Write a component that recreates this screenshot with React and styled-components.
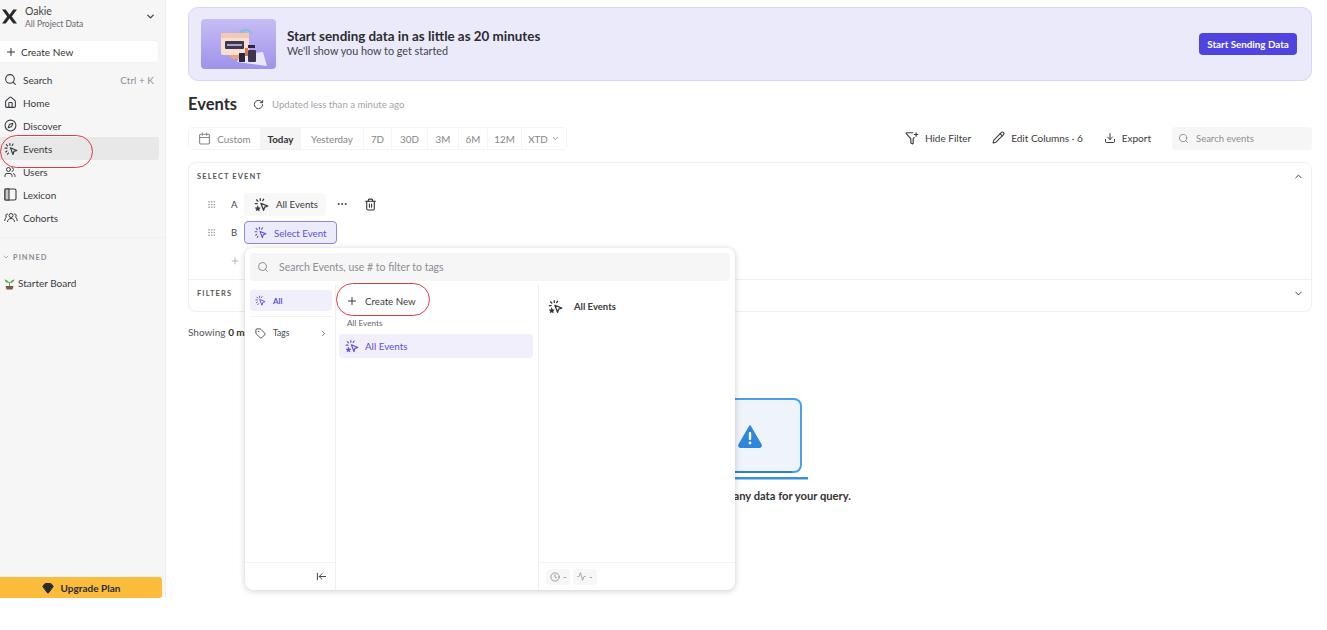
import React from 'react';
import styled, { createGlobalStyle } from 'styled-components';
import {
  Search, Home, Compass, Users, Plus, ChevronDown, ChevronUp, ChevronRight, RotateCw, Calendar,
  Grip, Trash2, Ellipsis, Tag, ArrowLeftToLine, Clock, Activity, Pencil, Download, FunnelPlus, Gem,
} from 'lucide-react';

const GlobalStyle = createGlobalStyle`
  html, body { margin: 0; padding: 0; background: #fff; }
  body { font-family: "Lato", "Liberation Sans", sans-serif; color: #333338; }
  * { box-sizing: border-box; }
`;

const Page = styled.div`
  position: relative;
  display: flex;
  align-items: flex-start;
  width: 1327px;
  height: 630px;
  overflow: hidden;
`;

const Sidebar = styled.aside`
  display: flex;
  flex-direction: column;
  flex: none;
  width: 166px;
  height: 598px;
  background: #f6f6f6;
  border-right: 1px solid #efefef;
`;

const ProjectRow = styled.div`
  display: flex;
  align-items: center;
  height: 33px;
  padding: 0 9px 0 2px;
`;

const ProjectText = styled.div`
  flex: 1;
  margin-left: 8px;
`;

const ProjectName = styled.div`
  font-size: 10.5px;
  line-height: 14px;
  color: #444;
`;

const ProjectSub = styled.div`
  font-size: 8.5px;
  line-height: 12px;
  color: #66666c;
`;

const CreateRow = styled.div`
  display: flex;
  align-items: center;
  gap: 4px;
  width: 158px;
  height: 21px;
  margin: 8px 0 6px;
  padding-left: 5px;
  background: #fff;
  border-radius: 0 3px 3px 0;
  box-shadow: 0 0 2px rgba(0, 0, 0, 0.06);
  font-size: 10px;
  color: #333;
`;

const NavRow = styled.div`
  display: flex;
  align-items: center;
  width: 159px;
  height: 23px;
  padding: 0 5px 0 4px;
  font-size: 10px;
  color: #3a3a40;
  background: ${p => (p.$active ? '#e8e8e8' : 'transparent')};
  border-radius: 0 3px 3px 0;
`;

const NavIcon = styled.span`
  display: flex;
  width: 19px;
  color: #3a3a40;
`;

const NavLabel = styled.span`
  flex: 1;
`;

const Shortcut = styled.span`
  font-size: 10px;
  color: #909096;
`;

const SideDivider = styled.div`
  height: 1px;
  margin-top: 8px;
  background: #f0f0f0;
`;

const PinnedLabel = styled.div`
  display: flex;
  align-items: center;
  gap: 3px;
  margin: 13px 0 0 2px;
  height: 12px;
  font-size: 7.5px;
  letter-spacing: 1px;
  color: #8d8d93;
  font-weight: 700;
`;

const PinnedRow = styled.div`
  display: flex;
  align-items: center;
  gap: 3px;
  margin-top: 13px;
  padding-left: 4px;
  height: 14px;
  font-size: 10px;
  color: #3a3a40;
`;

const UpgradeButton = styled.div`
  display: flex;
  align-items: center;
  justify-content: center;
  gap: 7px;
  width: 162px;
  height: 21px;
  margin-top: auto;
  background: #fbbc3d;
  border-radius: 0 3px 3px 0;
  font-size: 10px;
  font-weight: 700;
  color: #2c2c30;
`;

const Main = styled.main`
  flex: none;
  width: 1146px;
  padding: 7px 0 0 22px;
`;

const Banner = styled.section`
  display: flex;
  align-items: center;
  width: 1124px;
  height: 74px;
  padding: 0 14px 0 12px;
  background: #eaeafa;
  border: 1px solid #d8d6f0;
  border-radius: 10px;
`;

const BannerArt = styled.div`
  flex: none;
  width: 75px;
  height: 50px;
  border-radius: 4px;
  overflow: hidden;
  background: linear-gradient(180deg, #c6bdf5 0%, #9f92ea 100%);
`;

const BannerText = styled.div`
  flex: 1;
  margin: 0 0 3px 11px;
`;

const BannerTitle = styled.div`
  font-size: 13.4px;
  line-height: 16px;
  font-weight: 700;
  color: #2c2c30;
`;

const BannerSub = styled.div`
  font-size: 10.8px;
  line-height: 14px;
  color: #44444a;
`;

const PrimaryButton = styled.div`
  display: flex;
  align-items: center;
  justify-content: center;
  width: 98px;
  height: 22px;
  background: #4f44e0;
  border-radius: 4px;
  font-size: 9.8px;
  font-weight: 700;
  color: #fff;
`;

const TitleRow = styled.div`
  display: flex;
  align-items: center;
  height: 20px;
  margin-top: 13px;
`;

const PageTitle = styled.h1`
  margin: 0 16px 0 0;
  font-size: 16.5px;
  font-weight: 700;
  color: #2c2c30;
`;

const Updated = styled.span`
  margin-left: 8px;
  font-size: 9.6px;
  color: #a4a4aa;
`;

const Toolbar = styled.div`
  display: flex;
  align-items: center;
  justify-content: space-between;
  width: 1124px;
  height: 23px;
  margin-top: 13px;
`;

const Segments = styled.div`
  display: flex;
  height: 23px;
  border: 1px solid #f3f3f3;
  border-radius: 4px;
`;

const Segment = styled.div`
  display: flex;
  align-items: center;
  justify-content: center;
  gap: ${p => p.$gap || 6}px;
  width: ${p => p.$w}px;
  font-size: 9.8px;
  color: ${p => (p.$active ? '#333' : '#85858b')};
  font-weight: ${p => (p.$active ? 700 : 400)};
  background: ${p => (p.$active ? '#f5f5f5' : '#fff')};
  border-right: 1px solid #f5f5f5;
  &:last-child { border-right: 0; }
`;

const Actions = styled.div`
  display: flex;
  align-items: center;
`;

const Action = styled.div`
  display: flex;
  align-items: center;
  gap: 6px;
  margin-right: 21px;
  padding-bottom: 2px;
  font-size: 10px;
  color: #3a3a40;
`;

const SearchBox = styled.div`
  display: flex;
  align-items: center;
  gap: 7px;
  width: 140px;
  height: 23px;
  padding-left: 6px;
  background: #f6f6f6;
  border-radius: 4px;
  font-size: 9.5px;
  color: #8d8d93;
`;

const QueryCard = styled.section`
  width: 1124px;
  height: 150px;
  margin-top: 12px;
  border: 1px solid #f0f0f0;
  border-radius: 8px;
  box-shadow: 0 0 2px rgba(0, 0, 0, 0.03);
`;

const CardHeader = styled.div`
  display: flex;
  align-items: center;
  justify-content: space-between;
  height: 27px;
  padding: 0 7px 0 8px;
  font-size: 7.5px;
  font-weight: 700;
  letter-spacing: 1.1px;
  color: #55555b;
`;

const EventRow = styled.div`
  display: flex;
  align-items: center;
  height: 28.5px;
  padding-left: 18px;
`;

const RowLetter = styled.span`
  width: 13px;
  margin-left: 15px;
  font-size: 9.5px;
  color: #44444a;
`;

const EventChip = styled.div`
  display: flex;
  align-items: center;
  gap: 7px;
  width: ${p => p.$w}px;
  height: 23px;
  padding-left: 9px;
  border-radius: 4px;
  font-size: 9.7px;
  color: ${p => (p.$selected ? '#5b50d6' : '#3a3a40')};
  background: ${p => (p.$selected ? '#ecebfb' : '#f8f8f8')};
  border: 1px solid ${p => (p.$selected ? '#8f87e6' : 'transparent')};
`;

const ChipTool = styled.span`
  display: flex;
  margin-left: ${p => p.$gap}px;
  color: #333;
`;

const AddRow = styled.div`
  display: flex;
  height: 32px;
  padding: 9px 0 0 41px;
  color: #aaa;
`;

const CardFooter = styled(CardHeader)`
  height: 33px;
  padding-bottom: 6px;
  border-top: 1px solid #f0f0f0;
`;

const Showing = styled.div`
  margin-top: 14px;
  font-size: 10px;
  line-height: 13px;
  color: #55555b;
  b { color: #333; }
`;

const EmptyState = styled.div`
  display: flex;
  flex-direction: column;
  align-items: center;
  width: 1124px;
  margin-top: 59px;
`;

const EmptyText = styled.div`
  margin-top: 9px;
  font-size: 11.2px;
  line-height: 14px;
  font-weight: 700;
  color: #333;
`;

const Popover = styled.div`
  position: absolute;
  left: 245px;
  top: 248px;
  display: flex;
  flex-direction: column;
  width: 490px;
  height: 342px;
  background: #fff;
  border-radius: 8px;
  box-shadow: 0 1px 6px rgba(0, 0, 0, 0.2);
`;

const PopSearch = styled.div`
  display: flex;
  align-items: center;
  gap: 10px;
  height: 28px;
  margin: 5px 5px 0;
  padding-left: 7px;
  background: #f6f6f6;
  border-radius: 4px;
  font-size: 10.5px;
  color: #8d8d93;
`;

const PopColumns = styled.div`
  flex: 1;
  display: flex;
  margin-top: 4px;
  min-height: 0;
`;

const TabsColumn = styled.div`
  display: flex;
  flex-direction: column;
  flex: none;
  width: 91px;
  padding: 5px 3px 0 5px;
  border-right: 1px solid #efefef;
`;

const TabAll = styled.div`
  display: flex;
  align-items: center;
  gap: 7px;
  height: 21px;
  padding-left: 5px;
  background: #f0effb;
  border-radius: 3px;
  font-size: 8px;
  font-weight: 700;
  color: #5b50d6;
`;

const TabRow = styled.div`
  display: flex;
  align-items: center;
  height: 22px;
  margin-top: 5px;
  padding: 0 4px 0 5px;
  font-size: 8.5px;
  color: #44444a;
  span { flex: 1; margin-left: 7px; }
`;

const TabDivider = styled.div`
  height: 1px;
  margin-top: 5px;
  background: #f2f2f2;
`;

const CollapseSlot = styled.div`
  display: flex;
  justify-content: flex-end;
  align-items: center;
  height: 28px;
  margin: auto -3px 0 -5px;
  padding-right: 8px;
  border-top: 1px solid #f2f2f2;
  color: #333;
`;

const ListColumn = styled.div`
  flex: none;
  width: 203px;
  padding: 5px 5px 0 3px;
  border-right: 1px solid #efefef;
`;

const CreateItem = styled.div`
  display: flex;
  align-items: center;
  gap: 7px;
  height: 21px;
  padding-left: 7px;
  font-size: 9.7px;
  color: #3a3a40;
`;

const GroupLabel = styled.div`
  margin: 6px 0 0 8px;
  font-size: 8.2px;
  line-height: 12px;
  color: #66666c;
`;

const ListItem = styled.div`
  display: flex;
  align-items: center;
  gap: 6px;
  height: 24px;
  margin-top: 5px;
  padding-left: 6px;
  background: #f0effb;
  border-radius: 4px;
  font-size: 9.8px;
  color: #5b50d6;
`;

const DetailColumn = styled.div`
  flex: 1;
  display: flex;
  flex-direction: column;
`;

const DetailHead = styled.div`
  display: flex;
  align-items: center;
  gap: 11px;
  padding: 14px 0 0 9px;
  font-size: 9.5px;
  font-weight: 700;
  color: #3a3a40;
`;

const DetailFooter = styled.div`
  display: flex;
  align-items: center;
  gap: 3px;
  height: 28px;
  margin-top: auto;
  padding-left: 7px;
  border-top: 1px solid #f2f2f2;
`;

const StatChip = styled.div`
  display: flex;
  align-items: center;
  gap: 3px;
  height: 16px;
  padding: 0 4px;
  background: #f7f7f7;
  border-radius: 3px;
  font-size: 9px;
  color: #8d8d93;
`;

const RedOval = styled.div`
  position: absolute;
  left: ${p => p.$x}px;
  top: ${p => p.$y}px;
  width: ${p => p.$w}px;
  height: ${p => p.$h}px;
  border: 1.2px solid #dd3c46;
  border-radius: 17px;
  pointer-events: none;
`;

const SparkCursor = ({ size = 15, color = 'currentColor', star = true }) => (
  <svg width={size} height={size} viewBox="0 0 24 24" fill="none" stroke={color} strokeWidth="2" strokeLinecap="round" strokeLinejoin="round" style={{ flex: 'none' }}>
    <path d="M11 10l11 4.500-5 1.600-1.600 5.400z" />
    <path d="M10 2.500v3M4 4.500l2.200 2.200M15.500 3.500l-1.500 2.400M2 10.500h3.200" />
    {star
      ? <path d="M6 14.500l1.200 2.600 2.800.3-2.100 1.900.6 2.700L6 20.600 3.500 22l.6-2.700L2 17.400l2.800-.3z" fill={color} strokeWidth="1" />
      : <path d="M3 17l2-1.500M6 21l1.500-2" />}
  </svg>
);

const XLogo = () => (
  <svg width="15" height="15" viewBox="0 0 16 16" style={{ flex: 'none' }}>
    <path d="M0 .5h4l4 5.500 4-5.500h4l-5.500 7.500 5.500 7.500h-4L8 10 4 15.500H0L5.500 8z" fill="#2a2a2a" />
  </svg>
);

const LexiconIcon = () => (
  <svg width="13" height="13" viewBox="0 0 13 13" fill="none" stroke="#3a3a40" strokeWidth="1.100">
    <rect x="1" y="1" width="11" height="11" rx="1.500" />
    <rect x="1" y="1" width="4" height="11" fill="#c9c9cc" />
  </svg>
);

const CohortIcon = () => (
  <svg width="14" height="13" viewBox="0 0 14 13" fill="none" stroke="#3a3a40" strokeWidth="1">
    <circle cx="7" cy="4.500" r="2" />
    <path d="M3.500 11c.3-2.500 1.600-3.500 3.500-3.500s3.200 1 3.500 3.500" />
    <path d="M4 3a1.700 1.700 0 0 0-1.500 3C1.300 7 1 8.500 .7 10M10 3a1.700 1.700 0 0 1 1.500 3c1.200 1 1.500 2.500 1.800 4" />
  </svg>
);

const Sprout = () => (
  <svg width="11" height="13" viewBox="0 0 11 13" style={{ flex: 'none' }}>
    <path d="M5.500 6C4 3.500 2 2.500 .5 2.500 1 5 3 6.200 5.500 6zM5.500 6c1.500-2.500 3.500-3.500 5-3.500C10 5 8 6.200 5.500 6z" fill="#5fae52" />
    <rect x="5" y="5" width="1" height="4" fill="#5fae52" />
    <path d="M1.500 9h8l-1 3.500h-6z" fill="#7a5a45" />
  </svg>
);

const BannerIllustration = () => (
  <svg width="75" height="50" viewBox="0 0 75 50">
    <path d="M38 16c2-6 10-7 13-1" fill="none" stroke="#7fc4d4" strokeWidth="2" />
    <rect x="20" y="14" width="28" height="22" rx="2" fill="#f8dfd0" />
    <rect x="20" y="14" width="28" height="5" fill="#f3c9b4" />
    <rect x="24" y="22" width="19" height="8" rx="1" fill="#3c3650" />
    <rect x="26" y="25" width="15" height="2" fill="#a9a4c2" />
    <path d="M28 36h14l-3 4H31z" fill="#eda27e" />
    <path d="M36 43l6-12 10 3 10-1 4 14z" fill="#e9e6fb" />
    <rect x="38" y="34" width="6" height="9" fill="#2b2740" />
    <rect x="47" y="26" width="7" height="3" fill="#2b2740" />
    <rect x="47" y="31" width="8" height="12" rx="1" fill="#3c3650" />
    <rect x="44" y="29" width="3" height="8" fill="#d97c4a" />
  </svg>
);

const EmptyIllustration = () => (
  <svg width="116" height="82" viewBox="0 0 116 82">
    <rect x="7" y="1" width="102" height="73" rx="7" fill="#eff4fa" stroke="#4a9fe8" strokeWidth="2" />
    <path d="M7 74h93M7 1h10" stroke="#2e7fd1" strokeWidth="2" fill="none" />
    <rect x="0" y="79" width="116" height="2.500" fill="#3b8fdd" />
    <path d="M58 28l11 19a1.500 1.500 0 0 1-1.300 2.200H48.300A1.500 1.500 0 0 1 47 47z" fill="#2e86de" stroke="#2e86de" strokeWidth="1.500" strokeLinejoin="round" />
    <rect x="56.800" y="34" width="2.400" height="8" rx="1" fill="#fff" />
    <circle cx="58" cy="45" r="1.400" fill="#fff" />
  </svg>
);

const navItems = [
  { label: 'Search', icon: <Search size={13} />, shortcut: 'Ctrl + K' },
  { label: 'Home', icon: <Home size={13} /> },
  { label: 'Discover', icon: <Compass size={13} /> },
  { label: 'Events', icon: <SparkCursor size={14} star={false} />, active: true },
  { label: 'Users', icon: <Users size={12} /> },
  { label: 'Lexicon', icon: <LexiconIcon /> },
  { label: 'Cohorts', icon: <CohortIcon /> },
];

const ranges = [
  { label: 'Today', w: 40, active: true },
  { label: 'Yesterday', w: 63 },
  { label: '7D', w: 28 },
  { label: '30D', w: 36 },
  { label: '3M', w: 31 },
  { label: '6M', w: 29 },
  { label: '12M', w: 34 },
];

const App = () => (
  <Page>
    <GlobalStyle />
    <Sidebar>
      <ProjectRow>
        <XLogo />
        <ProjectText>
          <ProjectName>Oakie</ProjectName>
          <ProjectSub>All Project Data</ProjectSub>
        </ProjectText>
        <ChevronDown size={11} strokeWidth={2.5} />
      </ProjectRow>
      <CreateRow><Plus size={12} />Create New</CreateRow>
      {navItems.map(item => (
        <NavRow key={item.label} $active={item.active}>
          <NavIcon>{item.icon}</NavIcon>
          <NavLabel>{item.label}</NavLabel>
          {item.shortcut && <Shortcut>{item.shortcut}</Shortcut>}
        </NavRow>
      ))}
      <SideDivider />
      <PinnedLabel><ChevronDown size={8} />PINNED</PinnedLabel>
      <PinnedRow><Sprout />Starter Board</PinnedRow>
      <UpgradeButton><Gem size={12} fill="#2c2c30" />Upgrade Plan</UpgradeButton>
    </Sidebar>

    <Main>
      <Banner>
        <BannerArt><BannerIllustration /></BannerArt>
        <BannerText>
          <BannerTitle>Start sending data in as little as 20 minutes</BannerTitle>
          <BannerSub>We'll show you how to get started</BannerSub>
        </BannerText>
        <PrimaryButton>Start Sending Data</PrimaryButton>
      </Banner>

      <TitleRow>
        <PageTitle>Events</PageTitle>
        <RotateCw size={11} />
        <Updated>Updated less than a minute ago</Updated>
      </TitleRow>

      <Toolbar>
        <Segments>
          <Segment $w={72}><Calendar size={13} />Custom</Segment>
          {ranges.map(r => (
            <Segment key={r.label} $w={r.w} $active={r.active}>{r.label}</Segment>
          ))}
          <Segment $w={44} $gap={3}>XTD<ChevronDown size={9} /></Segment>
        </Segments>
        <Actions>
          <Action><FunnelPlus size={14} />Hide Filter</Action>
          <Action><Pencil size={13} />Edit Columns · 6</Action>
          <Action><Download size={12} />Export</Action>
          <SearchBox><Search size={11} />Search events</SearchBox>
        </Actions>
      </Toolbar>

      <QueryCard>
        <CardHeader>SELECT EVENT<ChevronUp size={11} color="#333" /></CardHeader>
        <EventRow>
          <Grip size={9} color="#999" />
          <RowLetter>A</RowLetter>
          <EventChip $w={82}><SparkCursor size={15} />All Events</EventChip>
          <ChipTool $gap={10}><Ellipsis size={12} /></ChipTool>
          <ChipTool $gap={16}><Trash2 size={13} /></ChipTool>
        </EventRow>
        <EventRow>
          <Grip size={9} color="#999" />
          <RowLetter>B</RowLetter>
          <EventChip $w={93} $selected><SparkCursor size={13} star={false} />Select Event</EventChip>
        </EventRow>
        <AddRow><Plus size={10} /></AddRow>
        <CardFooter>FILTERS<ChevronDown size={11} color="#333" /></CardFooter>
      </QueryCard>

      <Showing>Showing <b>0 matches</b></Showing>

      <EmptyState>
        <EmptyIllustration />
        <EmptyText>We couldn't find any data for your query.</EmptyText>
      </EmptyState>
    </Main>

    <Popover>
      <PopSearch><Search size={12} color="#8d8d93" />Search Events, use # to filter to tags</PopSearch>
      <PopColumns>
        <TabsColumn>
          <TabAll><SparkCursor size={11} star={false} />All</TabAll>
          <TabDivider />
          <TabRow><Tag size={11} /><span>Tags</span><ChevronRight size={9} /></TabRow>
          <CollapseSlot><ArrowLeftToLine size={11} /></CollapseSlot>
        </TabsColumn>
        <ListColumn>
          <CreateItem><Plus size={12} />Create New</CreateItem>
          <GroupLabel>All Events</GroupLabel>
          <ListItem><SparkCursor size={14} />All Events</ListItem>
        </ListColumn>
        <DetailColumn>
          <DetailHead><SparkCursor size={15} color="#333" />All Events</DetailHead>
          <DetailFooter>
            <StatChip><Clock size={10} />-</StatChip>
            <StatChip><Activity size={9} />-</StatChip>
          </DetailFooter>
        </DetailColumn>
      </PopColumns>
    </Popover>

    <RedOval $x={0} $y={135} $w={93} $h={33} />
    <RedOval $x={336} $y={283} $w={94} $h={33} />
  </Page>
);

export default App;
